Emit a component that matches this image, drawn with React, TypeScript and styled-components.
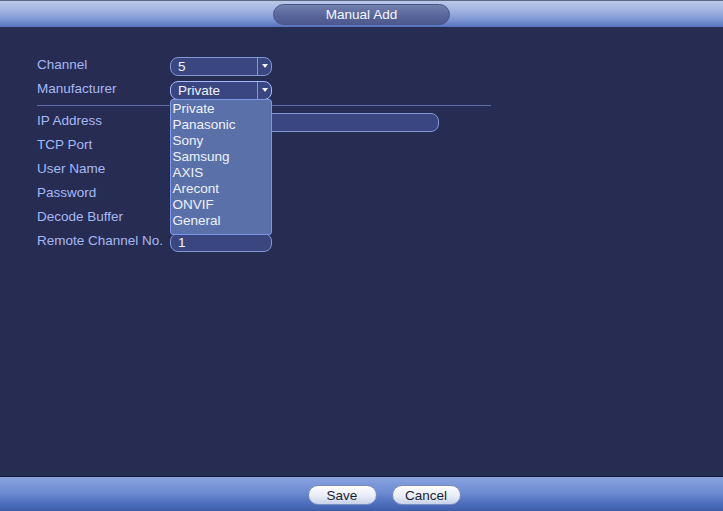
import React from "react";
import styled, { createGlobalStyle } from "styled-components";

const Global = createGlobalStyle`
  html, body { margin: 0; padding: 0; background: #272c53; }
  body { font-family: "Liberation Sans", Arial, sans-serif; }
  * { box-sizing: border-box; }
`;

const Page = styled.div`
  width: 723px;
  height: 511px;
  display: flex;
  flex-direction: column;
  background: #272c53;
  overflow: hidden;
`;

const TitleBar = styled.div`
  height: 27px;
  flex: none;
  border-top: 1px solid #5e6780;
  background: linear-gradient(#bcc8e6 0%, #a2b4e0 35%, #7f98d6 70%, #5673bf 100%);
  display: flex;
  justify-content: center;
  align-items: center;
  padding-top: 1px;
`;

const TitlePill = styled.div`
  width: 177px;
  height: 21px;
  border-radius: 11px;
  border: 1px solid #48558a;
  background: linear-gradient(#7281ad, #56649a 60%, #4c5a8e);
  color: #f6f8ff;
  font-size: 13.5px;
  display: flex;
  align-items: center;
  justify-content: center;
`;

const Body = styled.div`
  flex: 1;
  padding: 27px 0 0 37px;
`;

const Row = styled.div`
  height: 24px;
  display: grid;
  grid-template-columns: 133px auto;
  align-items: center;
`;

const Label = styled.div`
  color: #a6b9f4;
  font-size: 13.5px;
  margin-top: -3px;
`;

const Divider = styled.div`
  width: 454px;
  height: 1px;
  background: #5d6ba6;
  margin: 3px 0 4px;
`;

const Field = styled.div<{ $w: number; $focus?: boolean }>`
  position: relative;
  width: ${(p) => p.$w}px;
  height: 19px;
  border-radius: 8px;
  border: 1.5px solid ${(p) => (p.$focus ? "#a4baff" : "#8297d6")};
  background: #3a4680;
  color: #f0f3ff;
  font-size: 13.5px;
  display: flex;
  align-items: center;
  padding-left: 7px;
`;

const Arrow = styled.div`
  position: absolute;
  right: 0;
  top: 0;
  bottom: 0;
  width: 14px;
  border-left: 1px solid #8297d6;
  display: flex;
  align-items: center;
  justify-content: center;
  &::after {
    content: "";
    border-left: 3px solid transparent;
    border-right: 3px solid transparent;
    border-top: 4px solid #f4f6ff;
  }
`;

const DropList = styled.div`
  position: absolute;
  left: -1.5px;
  top: 17px;
  width: 102px;
  border: 1px solid #7a96ea;
  border-radius: 3px;
  background: #5a70a9;
  padding: 1px 0 5px;
  z-index: 5;
`;

const DropItem = styled.div`
  height: 16px;
  line-height: 16px;
  padding-left: 2px;
  color: #eef2fc;
  font-size: 13.5px;
`;

const BottomBar = styled.div`
  height: 35px;
  flex: none;
  border-top: 1px solid #141838;
  background: linear-gradient(#89a4e0 0%, #6d8bd2 45%, #5071c0 75%, #3e5ca8 100%);
  display: flex;
  justify-content: center;
  align-items: center;
  gap: 15px;
  padding-left: 45px;
  padding-top: 2px;
`;

const Button = styled.div`
  width: 69px;
  height: 20px;
  border-radius: 10px;
  background: linear-gradient(#ffffff, #e8ecf6 55%, #c8d2ea);
  border: 1px solid #7a8cc0;
  color: #1a1f33;
  font-size: 13.5px;
  display: flex;
  align-items: center;
  justify-content: center;
`;

const manufacturers = ["Private", "Panasonic", "Sony", "Samsung", "AXIS", "Arecont", "ONVIF", "General"];

export default function App() {
  return (
    <Page>
      <Global />
      <TitleBar>
        <TitlePill>Manual Add</TitlePill>
      </TitleBar>
      <Body>
        <Row>
          <Label>Channel</Label>
          <Field $w={102}>
            5
            <Arrow />
          </Field>
        </Row>
        <Row>
          <Label>Manufacturer</Label>
          <Field $w={102} $focus>
            Private
            <Arrow />
            <DropList>
              {manufacturers.map((m) => (
                <DropItem key={m}>{m}</DropItem>
              ))}
            </DropList>
          </Field>
        </Row>
        <Divider />
        <Row>
          <Label>IP Address</Label>
          <Field $w={269} />
        </Row>
        <Row>
          <Label>TCP Port</Label>
          <div />
        </Row>
        <Row>
          <Label>User Name</Label>
          <div />
        </Row>
        <Row>
          <Label>Password</Label>
          <div />
        </Row>
        <Row>
          <Label>Decode Buffer</Label>
          <div />
        </Row>
        <Row>
          <Label>Remote Channel No.</Label>
          <Field $w={102}>1</Field>
        </Row>
      </Body>
      <BottomBar>
        <Button>Save</Button>
        <Button>Cancel</Button>
      </BottomBar>
    </Page>
  );
}
